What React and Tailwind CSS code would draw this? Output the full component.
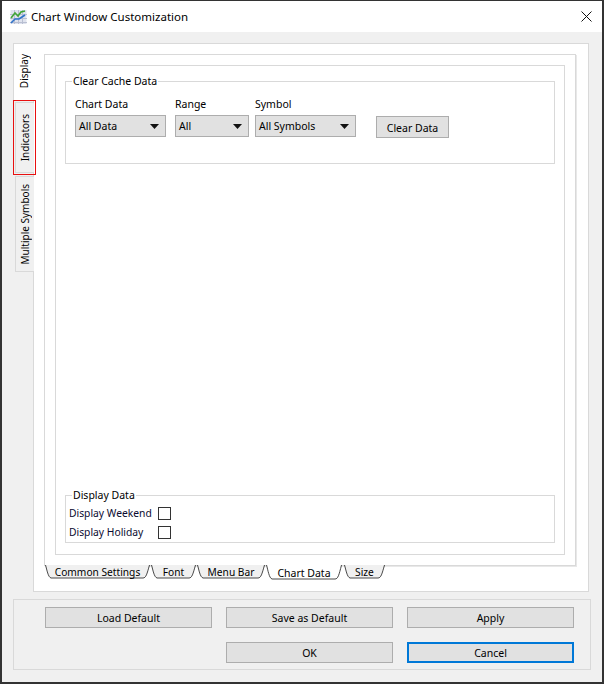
import React from 'react';

const font = { fontFamily: '"Noto Sans", sans-serif' };

const ChartIcon = () => (
  <svg width="17" height="16" viewBox="0 0 17 16" className="shrink-0">
    <rect x="0.5" y="1" width="16" height="14" fill="#dfe3ee" />
    <path d="M0 5.5H17M0 9.5H17M0 13.5H17M4.5 1V15M8.5 1V15M12.5 1V15" stroke="#b9bfd2" strokeWidth="1" fill="none" />
    <path d="M1 14L5 10L9 10L15 6" stroke="#2f73c9" strokeWidth="1.6" fill="none" />
    <path d="M1 9L5 4L8 7L11 3L15 2" stroke="#3fa535" strokeWidth="1.6" fill="none" />
  </svg>
);

const SideTab = ({ label, className }) => (
  <div className={`flex items-center justify-center ${className}`}>
    <span className="[writing-mode:vertical-rl] rotate-180 text-[10px] leading-none whitespace-nowrap">{label}</span>
  </div>
);

const Combo = ({ width, label }) => (
  <div className={`flex items-center justify-between h-[22px] ${width} bg-[#e1e1e1] border border-[#adadad] pl-[3px] pr-[6px] text-[10.5px]`}>
    <span className="pt-[2px]">{label}</span>
    <svg width="9" height="5" viewBox="0 0 9 5"><path d="M0 0H9L4.5 5Z" fill="#111" /></svg>
  </div>
);

const Field = ({ label, width, value, className }) => (
  <div className={`flex flex-col gap-[3px] ${className}`}>
    <span className="text-[10.5px] leading-[16px]">{label}</span>
    <Combo width={width} label={value} />
  </div>
);

const Check = ({ label }) => (
  <div className="flex items-center h-[19px] text-[10.3px] text-[#0a0a30]">
    <span className="w-[89px] whitespace-nowrap">{label}</span>
    <span className="w-[13px] h-[13px] border border-[#333] bg-white" />
  </div>
);

// bottom tabs have slanted sides, so each one is drawn behind its label
const BottomTab = ({ label, w, active, className = '' }) => {
  const h = active ? 15 : 14;
  return (
    <div className={`relative flex justify-center ${active ? 'pt-[1px] text-[10.5px]' : 'text-[10.2px]'} ${className}`} style={{ width: w, height: h }}>
      <svg width={w} height={h} className="absolute left-0 top-0">
        <path
          d={`M0.5 0C2 5 3 ${h - 2} 6 ${h - 1}H${w - 7}C${w - 4} ${h - 1} ${w - 3} ${h - 5} ${w - 0.5} 0`}
          fill={active ? '#ffffff' : '#f0f0f0'}
          stroke="#333"
          strokeWidth="0.9"
        />
      </svg>
      <span className="relative leading-[14px] whitespace-nowrap">{label}</span>
    </div>
  );
};

const Btn = ({ label, focused }) => (
  <button className={`w-[167px] h-[21px] pt-[2px] bg-[#e1e1e1] text-[10.5px] leading-none ${focused ? 'border-2 border-[#0078d7]' : 'border border-[#adadad]'}`}>
    {label}
  </button>
);

export default function App() {
  return (
    <div style={font} className="flex flex-col w-[604px] h-[684px] border-x-2 border-t border-b-2 border-[#333] bg-[#f0f0f0] text-black overflow-hidden">
      {/* Title bar */}
      <div className="flex items-center h-[31px] bg-white pl-[8px] pr-[8px] shrink-0">
        <ChartIcon />
        <span className="ml-[4px] text-[11.5px]">Chart Window Customization</span>
        <svg width="11" height="11" viewBox="0 0 11 11" className="ml-auto mr-[2px]">
          <path d="M0.5 0.5L10.5 10.5M10.5 0.5L0.5 10.5" stroke="#111" strokeWidth="1" />
        </svg>
      </div>

      {/* Main panel */}
      <div className="flex ml-[11px] mt-[11px] h-[549px] shrink-0">
        <div className="relative z-10 flex flex-col w-[21px] -mr-px">
          <SideTab label="Display" className="w-[21px] h-[57px] pb-[1px] bg-white border-l border-t border-[#d9d9d9]" />
          <div className="relative ml-[2px] mt-[2px]">
            <SideTab label="Indicators" className="w-[19px] h-[71px] pr-[1px] bg-[#f0f0f0] border-l border-y border-[#d9d9d9]" />
            <span className="absolute -left-[2px] -right-[2px] -top-[2px] -bottom-[2px] border border-[#e81010]" />
          </div>
          <SideTab label="Multiple Symbols" className="w-[19px] h-[96px] ml-[2px] mt-[3px] pr-[1px] bg-[#f0f0f0] border-l border-y border-[#d9d9d9]" />
        </div>

        <div className="flex flex-col w-[556px] pl-[10px] pt-[10px] bg-white border border-[#d9d9d9]">
          <div className="w-[532px] h-[512px] p-[10px] border border-[#d9d9d9] shadow-[1px_1px_0_#e8e8e8]">
            <div className="flex flex-col justify-between h-full border border-[#d9d9d9] px-[9px] pt-[7px] pb-[11px]">
              <fieldset className="h-[91px] border border-[#d9d9d9] px-[9px]">
                <legend className="-ml-[3px] px-[1px] text-[10.5px] leading-[16px]">Clear Cache Data</legend>
                <div className="flex items-start mt-[7px]">
                  <Field label="Chart Data" width="w-[91px]" value="All Data" />
                  <Field label="Range" width="w-[74px]" value="All" className="ml-[9px]" />
                  <Field label="Symbol" width="w-[101px]" value="All Symbols" className="ml-[6px]" />
                  <button className="ml-[20px] mt-[20px] w-[73px] h-[22px] pt-[2px] bg-[#e1e1e1] border border-[#adadad] text-[10.5px] leading-none">Clear Data</button>
                </div>
              </fieldset>
              <fieldset className="h-[56px] border border-[#d9d9d9] px-[3px]">
                <legend className="ml-[3px] px-[1px] text-[10.5px] leading-[16px]">Display Data</legend>
                <div className="mt-[1px]">
                  <Check label="Display Weekend" />
                  <Check label="Display Holiday" />
                </div>
              </fieldset>
            </div>
          </div>
          <div className="flex items-start ml-[1px] -mt-[1px]">
            <BottomTab label="Common Settings" w={105} />
            <BottomTab label="Font" w={45} className="ml-[1px]" />
            <BottomTab label="Menu Bar" w={68} className="ml-[1px]" />
            <BottomTab label="Chart Data" w={76} active className="ml-[1px]" />
            <BottomTab label="Size" w={41} className="ml-[2px]" />
          </div>
        </div>
      </div>

      {/* Footer buttons */}
      <div className="flex flex-col gap-[14px] ml-[11px] mt-[7px] w-[578px] h-[71px] border border-[#d9d9d9] pt-[7px] pl-[31px] shrink-0">
        <div className="flex gap-[14px]">
          <Btn label="Load Default" />
          <Btn label="Save as Default" />
          <Btn label="Apply" />
        </div>
        <div className="flex justify-end gap-[14px] pr-[16px]">
          <Btn label="OK" />
          <Btn label="Cancel" focused />
        </div>
      </div>
    </div>
  );
}
